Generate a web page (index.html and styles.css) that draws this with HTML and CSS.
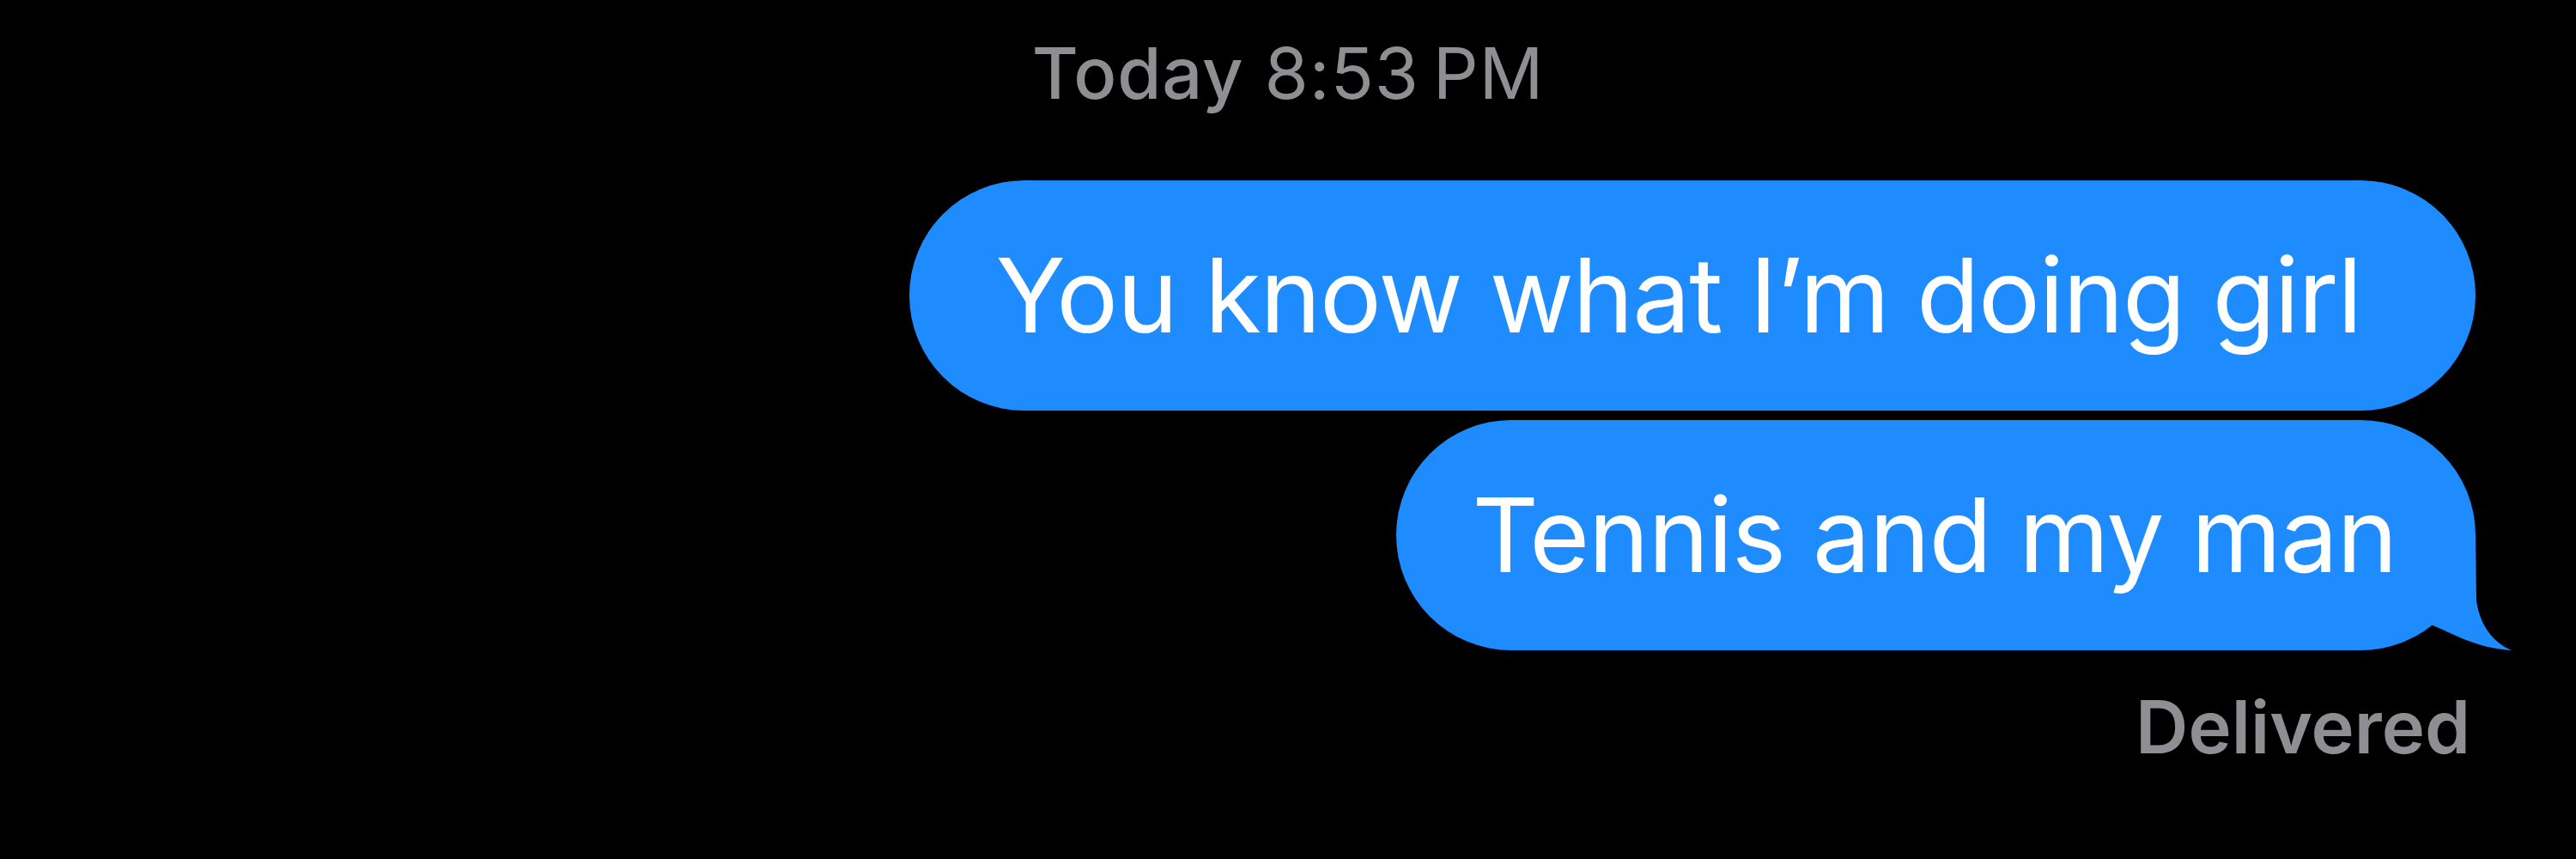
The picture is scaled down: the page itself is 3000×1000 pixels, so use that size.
FILE: index.html
```html
<!DOCTYPE html>
<html lang="en">
<head>
  <meta charset="UTF-8" />
  <title>Messages</title>
  <link rel="stylesheet" href="styles.css">
</head>
<body>
  <div class="thread">
    <div class="timestamp"><strong>Today</strong> 8:53&#8239;PM</div>

    <div class="bubble first">You know what I’m doing girl</div>
    <div class="bubble last">
      Tennis and my man
      <!-- tail -->
      <svg class="tail" viewBox="0 0 130 160" width="130" height="160">
        <path d="M33 129 C55 138 85 156 125 158 C105 150 88 130 84 100 L83 24 L20 24 L20 129 Z" fill="#1e8bff"/>
      </svg>
    </div>

    <div class="status">Delivered</div>
  </div>
</body>
</html>
```

FILE: styles.css
```css
/* Page */
body {
  margin: 0;
  background: #000;
  font-family: Inter, "Noto Sans", sans-serif;
}

/* Thread column */
.thread {
  display: flex;
  flex-direction: column;
  align-items: flex-end;
  padding: 44px 117px 0 0;
}

/* Date line */
.timestamp {
  align-self: stretch;
  padding-left: 117px;
  text-align: center;
  font-size: 83px;
  letter-spacing: 0.8px;
  line-height: 1;
  color: #8e8e93;
}
.timestamp strong {
  font-weight: 500;
}

/* Message bubbles */
.bubble {
  position: relative;
  height: 268px;
  line-height: 268px;
  padding: 0 100px;
  border-radius: 134px;
  background: #1e8bff;
  color: #fff;
  font-size: 120px;
  letter-spacing: -1.35px;
  white-space: nowrap;
}
.bubble.first {
  margin-top: 83px;
  padding-right: 133px;
}
.bubble.last {
  margin-top: 11px;
  padding: 0 92px 0 88px;
}

.tail {
  position: absolute;
  right: -47px;
  bottom: -2px;
}

/* Delivered */
.status {
  margin-top: 47px;
  padding-right: 6px;
  font-size: 85px;
  line-height: 1;
  font-weight: 600;
  color: #8e8e93;
}
```
